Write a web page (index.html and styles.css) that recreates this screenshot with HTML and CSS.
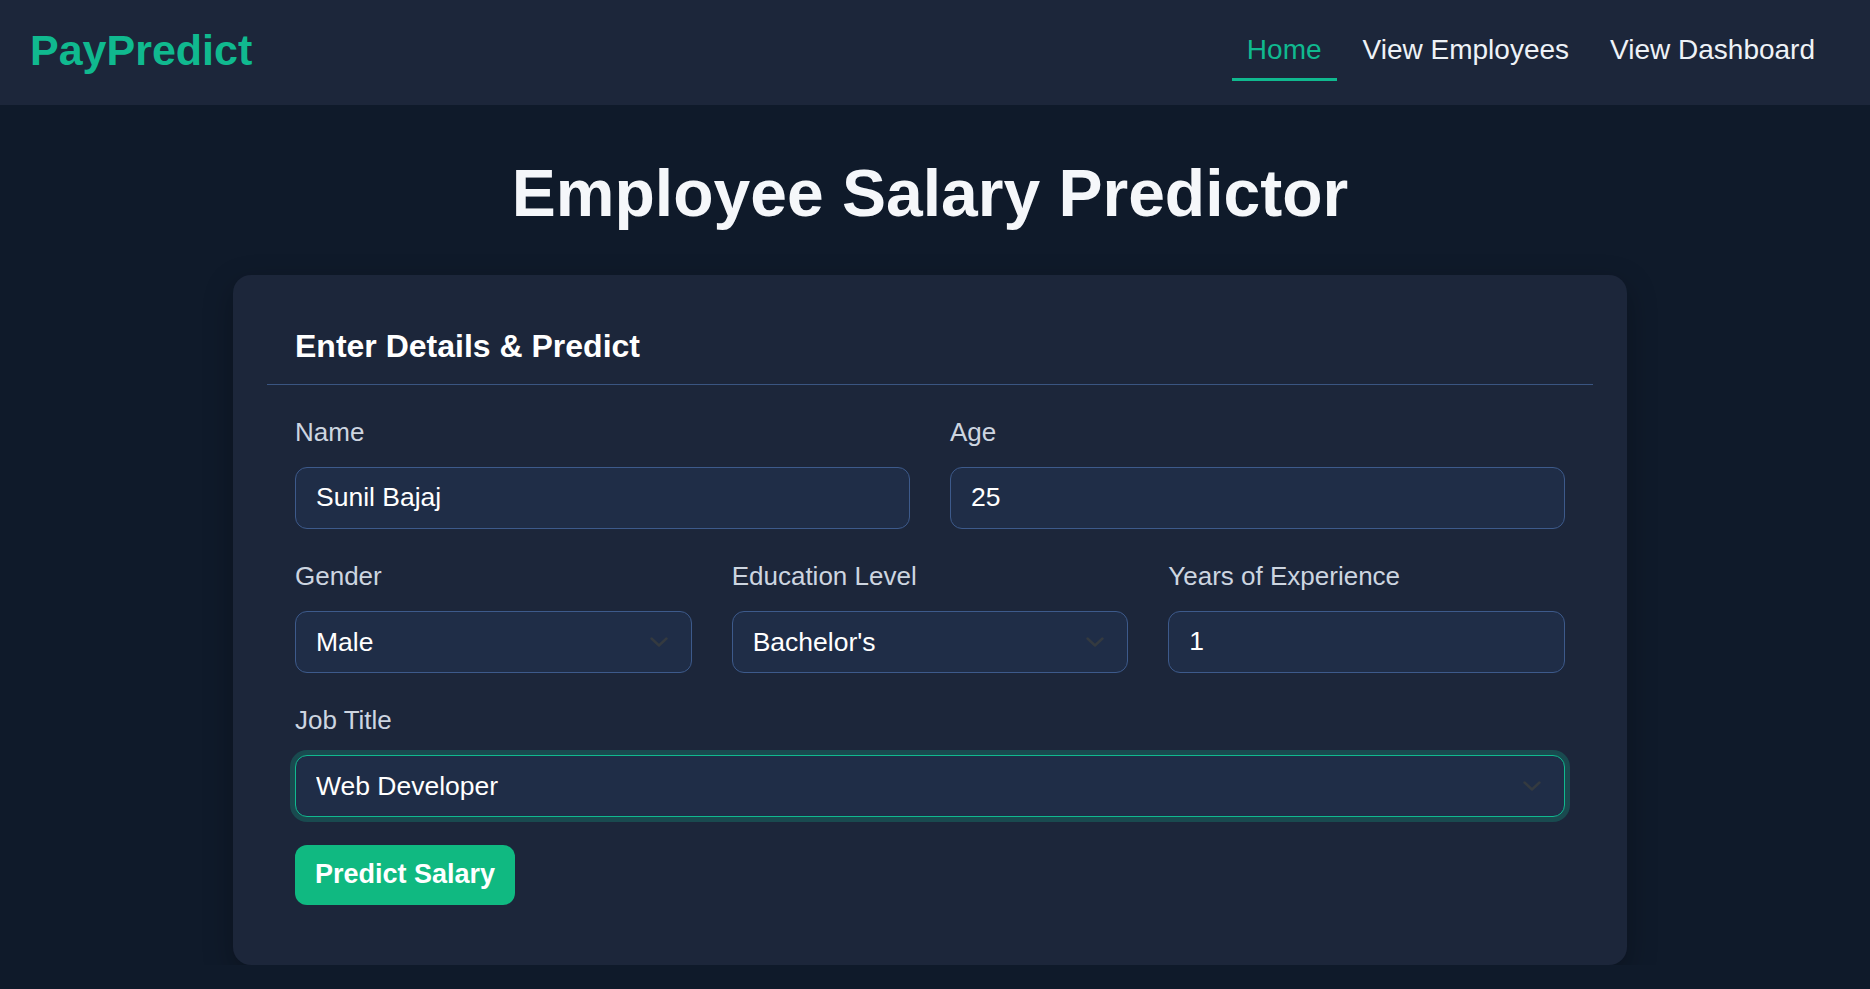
FILE: index.html
```html
<!DOCTYPE html>
<html lang="en">
<head>
<meta charset="utf-8">
<title>PayPredict</title>
<link rel="stylesheet" href="styles.css">
</head>
<body>
<header class="topbar">
  <div class="logo">PayPredict</div>
  <nav class="nav">
    <a class="nav-link active" href="#">Home</a>
    <a class="nav-link" href="#">View Employees</a>
    <a class="nav-link" href="#">View Dashboard</a>
  </nav>
</header>
<main class="main">
  <h1 class="title">Employee Salary Predictor</h1>
  <section class="card">
    <div class="card-header">Enter Details &amp; Predict</div>
    <form class="card-body">
      <div class="row cols-2">
        <div class="field">
          <label class="label">Name</label>
          <input class="control" type="text" value="Sunil Bajaj">
        </div>
        <div class="field">
          <label class="label">Age</label>
          <input class="control" type="text" value="25">
        </div>
      </div>
      <div class="row cols-3">
        <div class="field">
          <label class="label">Gender</label>
          <div class="select-wrap">
            <select class="control select"><option selected>Male</option><option>Female</option></select>
            <svg class="chevron" width="18" height="10" viewBox="0 0 18 10"><path d="M1.5 1.5 9 8.5 16.5 1.5" fill="none" stroke="#343a40" stroke-width="2.4" stroke-linecap="round" stroke-linejoin="round"/></svg>
          </div>
        </div>
        <div class="field">
          <label class="label">Education Level</label>
          <div class="select-wrap">
            <select class="control select"><option selected>Bachelor's</option><option>Master's</option><option>PhD</option></select>
            <svg class="chevron" width="18" height="10" viewBox="0 0 18 10"><path d="M1.5 1.5 9 8.5 16.5 1.5" fill="none" stroke="#343a40" stroke-width="2.4" stroke-linecap="round" stroke-linejoin="round"/></svg>
          </div>
        </div>
        <div class="field">
          <label class="label">Years of Experience</label>
          <input class="control" type="text" value="1">
        </div>
      </div>
      <div class="row">
        <div class="field">
          <label class="label">Job Title</label>
          <div class="select-wrap">
            <select class="control select focused"><option selected>Web Developer</option><option>Data Analyst</option></select>
            <svg class="chevron" width="18" height="10" viewBox="0 0 18 10"><path d="M1.5 1.5 9 8.5 16.5 1.5" fill="none" stroke="#343a40" stroke-width="2.4" stroke-linecap="round" stroke-linejoin="round"/></svg>
          </div>
        </div>
      </div>
      <button class="btn" type="button">Predict Salary</button>
    </form>
  </section>
</main>
</body>
</html>
```
FILE: styles.css
```css
* { box-sizing: border-box; }
html, body {
  margin: 0;
  padding: 0;
  background: #0f1a2a;
  font-family: "Liberation Sans", Arial, sans-serif;
  color: #f1f5f9;
}
.topbar {
  height: 105px;
  background: #1c263a;
  display: flex;
  align-items: center;
  justify-content: space-between;
  padding: 0 40px 0 30px;
}
.logo {
  font-size: 43px;
  font-weight: 700;
  line-height: 1;
  color: #10b98f;
  margin-bottom: 5px;
}
.nav {
  display: flex;
  gap: 11px;
  align-items: center;
}
.nav-link {
  font-size: 28px;
  line-height: 42px;
  padding: 4px 15px 7px;
  color: #eef2f7;
  text-decoration: none;
  border-bottom: 3px solid transparent;
}
.nav-link.active {
  color: #10b98f;
  border-bottom-color: #10b98f;
}
.main {
  padding: 49px 10px 0 0;
}
.title {
  margin: 0;
  text-align: center;
  font-size: 66px;
  line-height: 1.2;
  font-weight: 700;
  color: #f5f7fa;
}
.card {
  width: 1394px;
  margin: 42px auto 0;
  background: #1c263a;
  border-radius: 18px;
  padding: 34px 34px 32px;
  box-shadow: 0 10px 30px rgba(0, 0, 0, 0.28);
}
.card-header {
  font-size: 32px;
  font-weight: 700;
  line-height: 1.2;
  color: #ffffff;
  padding: 18px 28px;
  border-bottom: 1px solid #3a5581;
}
.card-body {
  padding: 28px 28px 28px;
  margin: 0;
}
.row {
  display: grid;
  grid-template-columns: 1fr;
  column-gap: 40px;
  margin-bottom: 28px;
}
.row.cols-2 { grid-template-columns: 1fr 1fr; }
.row.cols-3 { grid-template-columns: 1fr 1fr 1fr; }
.field {
  display: flex;
  flex-direction: column;
  min-width: 0;
}
.label {
  font-size: 26px;
  line-height: 39px;
  color: #cdd5e0;
  margin-bottom: 15px;
}
.control {
  width: 100%;
  height: 62px;
  padding: 0 20px;
  font-family: "Liberation Sans", Arial, sans-serif;
  font-size: 26.5px;
  color: #ffffff;
  background: #1f2d47;
  border: 1px solid #3d5a8b;
  border-radius: 12px;
  outline: none;
}
.select-wrap {
  position: relative;
}
.select {
  -webkit-appearance: none;
  appearance: none;
  padding-right: 56px;
}
.select.focused {
  border-color: #10b98f;
  box-shadow: 0 0 0 5px rgba(16, 185, 143, 0.25);
}
.chevron {
  position: absolute;
  right: 24px;
  top: 50%;
  margin-top: -5px;
  pointer-events: none;
}
.btn {
  display: block;
  height: 60px;
  padding: 0 20px;
  font-family: "Liberation Sans", Arial, sans-serif;
  font-size: 27px;
  font-weight: 700;
  color: #ffffff;
  background: #10b981;
  border: none;
  border-radius: 12px;
}
```
